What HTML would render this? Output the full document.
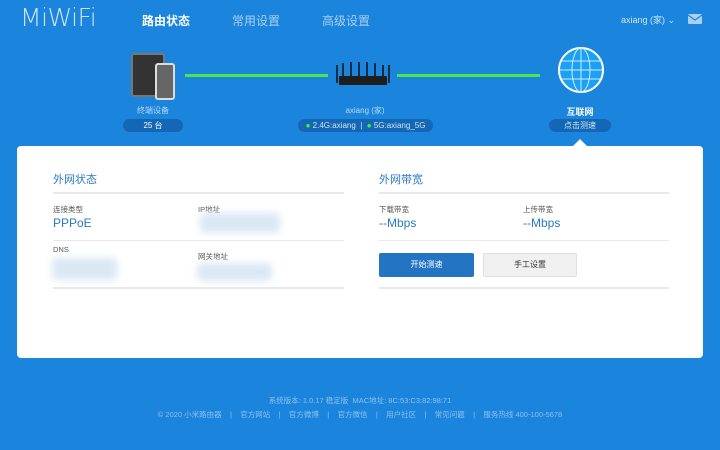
<!DOCTYPE html>
<html><head><meta charset="utf-8"><style>
*{margin:0;padding:0;box-sizing:border-box}
body{width:720px;height:450px;background:#1b84dd;font-family:"Liberation Sans","Noto Sans CJK SC",sans-serif;position:relative;overflow:hidden;color:#fff}
.a{position:absolute}
.nav{font-size:12px;color:#a9d0f3}
.pill{background:#1467b4;border-radius:8px;font-size:8px;color:#cfe4f7;text-align:center;line-height:13px}
.gl{height:3px;background:#4be64b}
.card{left:17px;top:146px;width:686px;height:212px;background:#fff;border-radius:4px}
.t{color:#2a78c6;font-size:11px}
.lbl{color:#555;font-size:7.5px}
.val{color:#2a78c6;font-size:12px}
.ln{height:2px;background:#e8e8e8}
.blur{background:#dbe7f4;filter:blur(4px);border-radius:4px}
.ft{font-size:7.5px;color:#8ec2ef;width:720px;text-align:center}
</style></head><body>
<div class="a" style="left:20px;top:3px;font-size:25px;color:#cfe3f6;letter-spacing:-0.5px;font-family:'DejaVu Sans','Liberation Sans',sans-serif;font-weight:200">MiWiFi</div>
<div class="a nav" style="left:142px;top:12px;color:#fff;font-weight:bold">路由状态</div>
<div class="a nav" style="left:232px;top:12px">常用设置</div>
<div class="a nav" style="left:322px;top:12px">高级设置</div>
<div class="a" style="left:621px;top:13px;font-size:9px;color:#cfe4f7">axiang (家) ⌄</div>
<div class="a" style="left:688px;top:14px;width:14px;height:10px;background:#a9d0f3;border-radius:1px"></div>
<svg class="a" style="left:688px;top:14px" width="14" height="10"><path d="M0 1 L7 6 L14 1" stroke="#1b84dd" fill="none" stroke-width="1.2"/></svg>
<div class="a" style="left:131px;top:53px;width:34px;height:44px;background:#333;border:2px solid #777;border-radius:3px"></div>
<div class="a" style="left:155px;top:63px;width:20px;height:37px;background:#666;border:2px solid #ddd;border-radius:3px"></div>
<div class="gl a" style="left:185px;top:74px;width:143px"></div>
<div class="gl a" style="left:397px;top:74px;width:143px"></div>
<svg class="a" style="left:333px;top:60px" width="60" height="30"><g stroke="#111" stroke-width="1.5"><path d="M4 5v18M10 3v18M18 2v18M26 2v18M34 2v18M42 3v18M50 5v18M56 5v18"/></g><rect x="6" y="16" width="48" height="9" fill="#1e1e1e" rx="1"/></svg>
<svg class="a" style="left:557px;top:46px" width="48" height="48"><circle cx="24" cy="24" r="22" fill="#1aa0f5" stroke="#fff" stroke-width="2"/><g stroke="#d4ecfd" fill="none" stroke-width="1"><ellipse cx="24" cy="24" rx="9" ry="22"/><path d="M24 2v44M4 15h40M2 24h44M4 33h40"/></g></svg>
<div class="a" style="left:123px;top:105px;width:60px;text-align:center;font-size:8px;color:#b9daf5">终端设备</div>
<div class="a pill" style="left:123px;top:119px;width:60px;color:#fff">25 台</div>
<div class="a" style="left:300px;top:105px;width:130px;text-align:center;font-size:8px;color:#b9daf5">axiang (家)</div>
<div class="a pill" style="left:298px;top:119px;width:135px"><span style="color:#3f3">●</span> 2.4G:axiang &nbsp;| &nbsp;<span style="color:#3f3">●</span> 5G:axiang_5G</div>
<div class="a" style="left:550px;top:105px;width:60px;text-align:center;font-size:9px;font-weight:bold">互联网</div>
<div class="a pill" style="left:549px;top:119px;width:62px">点击测速</div>
<div class="a" style="left:573px;top:139px;width:0;height:0;border-left:7px solid transparent;border-right:7px solid transparent;border-bottom:7px solid #fff"></div>
<div class="a card"></div>
<div class="a t" style="left:53px;top:171px">外网状态</div>
<div class="a ln" style="left:53px;top:192px;width:291px"></div>
<div class="a lbl" style="left:53px;top:204px">连接类型</div>
<div class="a val" style="left:53px;top:216px">PPPoE</div>
<div class="a lbl" style="left:198px;top:204px">IP地址</div>
<div class="a blur" style="left:200px;top:213px;width:80px;height:20px"></div>
<div class="a ln" style="left:53px;top:240px;width:291px;height:1px"></div>
<div class="a lbl" style="left:53px;top:245px">DNS</div>
<div class="a blur" style="left:52px;top:258px;width:65px;height:22px"></div>
<div class="a lbl" style="left:198px;top:251px">网关地址</div>
<div class="a blur" style="left:197px;top:263px;width:75px;height:18px"></div>
<div class="a ln" style="left:53px;top:287px;width:291px"></div>
<div class="a t" style="left:379px;top:171px">外网带宽</div>
<div class="a ln" style="left:379px;top:192px;width:290px"></div>
<div class="a lbl" style="left:379px;top:204px">下载带宽</div>
<div class="a val" style="left:379px;top:216px">--Mbps</div>
<div class="a lbl" style="left:523px;top:204px">上传带宽</div>
<div class="a val" style="left:523px;top:216px">--Mbps</div>
<div class="a ln" style="left:379px;top:240px;width:290px;height:1px"></div>
<div class="a" style="left:379px;top:253px;width:95px;height:24px;background:#2474c4;border-radius:2px;font-size:8px;text-align:center;line-height:24px">开始测速</div>
<div class="a" style="left:483px;top:253px;width:94px;height:24px;background:#f0f0f0;border:1px solid #e0e0e0;border-radius:2px;font-size:8px;text-align:center;line-height:22px;color:#333">手工设置</div>
<div class="a ln" style="left:379px;top:287px;width:290px"></div>
<div class="a ft" style="left:0;top:395px">系统版本: 1.0.17 稳定版 &nbsp;MAC地址: 8C:53:C3:82:98:71</div>
<div class="a ft" style="left:0;top:409px">© 2020 小米路由器 &nbsp;&nbsp; | &nbsp;&nbsp; 官方网站 &nbsp;&nbsp; | &nbsp;&nbsp; 官方微博 &nbsp;&nbsp; | &nbsp;&nbsp; 官方微信 &nbsp;&nbsp; | &nbsp;&nbsp; 用户社区 &nbsp;&nbsp; | &nbsp;&nbsp; 常见问题 &nbsp;&nbsp; | &nbsp;&nbsp; 服务热线 400-100-5678</div>
</body></html>
